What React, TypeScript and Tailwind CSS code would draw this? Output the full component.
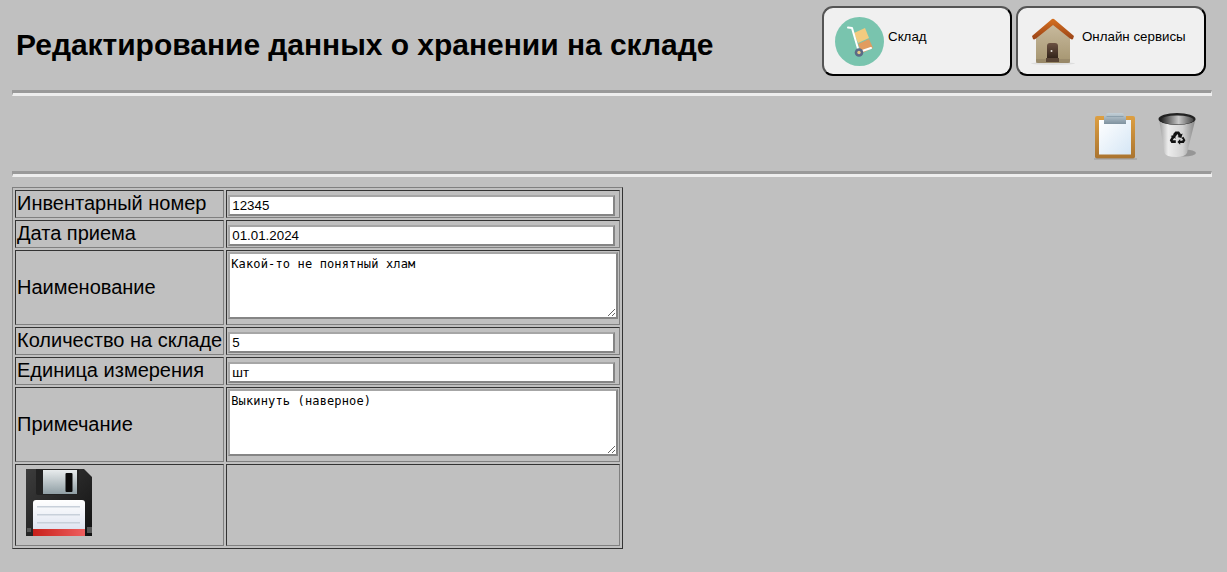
const arial = "font-['Liberation_Sans',Arial,sans-serif]";

function CartIcon() {
  return (
    <svg width="49" height="49" viewBox="0 0 49 49" className="shrink-0">
      <circle cx="24.5" cy="24.5" r="24.5" fill="#79c4ae" />
      <path d="M19 16 L30 11 L34 21 L23 26 Z" fill="#f2cb7f" />
      <path d="M23 27 L34 22 L38 31 L27 36 Z" fill="#e19c60" />
      <path d="M13 10.5 L17 11 L24 35 L36 31" fill="none" stroke="#fff" strokeWidth="2" strokeLinecap="round" strokeLinejoin="round" />
      <circle cx="24" cy="35.5" r="4.3" fill="#5b6a86" />
      <circle cx="24" cy="35.5" r="1.7" fill="#e4c884" />
    </svg>
  );
}

function HouseIcon() {
  return (
    <svg width="46" height="48" viewBox="0 0 46 48" className="shrink-0 blur-[0.3px]">
      <defs>
        <linearGradient id="wall" x1="0" y1="0" x2="0" y2="1">
          <stop offset="0" stopColor="#c9bb9f" />
          <stop offset="1" stopColor="#a59570" />
        </linearGradient>
        <linearGradient id="roof" x1="0" y1="0" x2="0" y2="1">
          <stop offset="0" stopColor="#d6701f" />
          <stop offset="1" stopColor="#9a4418" />
        </linearGradient>
        <linearGradient id="door" x1="0" y1="0" x2="0" y2="1">
          <stop offset="0" stopColor="#6b5142" />
          <stop offset="1" stopColor="#33241a" />
        </linearGradient>
      </defs>
      <ellipse cx="24" cy="46.5" rx="22" ry="1.5" fill="#000" opacity="0.08" />
      <path d="M7 19 L24 6 L41 19 V44 Q41 46 39 46 H9 Q7 46 7 44 Z" fill="url(#wall)" />
      <path d="M3 19 L23 2 Q24 1.5 25 2 L45 19 L44 22 Q43 23 41 21.5 L24 8 L7 21.5 Q5 23 4 22 Z" fill="url(#roof)" />
      <rect x="7" y="42" width="34" height="4" fill="#8b7c5f" opacity="0.5" />
      <path d="M18 41 V29 Q18 26 21 26 H26 Q29 26 29 29 V41 Z" fill="url(#door)" />
      <circle cx="22.5" cy="34" r="1" fill="#e8e4dc" />
      <rect x="17" y="41" width="13" height="4" fill="#5a4636" />
    </svg>
  );
}

function ClipboardIcon() {
  return (
    <svg width="44" height="48" viewBox="0 0 44 48" className="blur-[0.3px]">
      <defs>
        <linearGradient id="board" x1="0" y1="0" x2="0" y2="1">
          <stop offset="0" stopColor="#dd9f42" />
          <stop offset="1" stopColor="#aa7430" />
        </linearGradient>
        <linearGradient id="paper" x1="0" y1="0" x2="1" y2="1">
          <stop offset="0" stopColor="#ffffff" />
          <stop offset="1" stopColor="#d5e6f5" />
        </linearGradient>
        <linearGradient id="clip" x1="0" y1="0" x2="0" y2="1">
          <stop offset="0" stopColor="#c3d0d8" />
          <stop offset="1" stopColor="#7f929f" />
        </linearGradient>
      </defs>
      <rect x="1" y="4" width="40" height="42.5" rx="2" fill="url(#board)" />
      <rect x="5" y="8" width="32" height="34.5" fill="url(#paper)" />
      <path d="M12 4 Q12 1 14 1 H28 Q30 1 30 4 H32 V12 H10 V4 Z" fill="url(#clip)" />
      <rect x="12.5" y="4" width="17" height="1" fill="#8da0ac" />
      <rect x="0" y="46.5" width="43" height="1" fill="#8a8a8a" opacity="0.7" />
    </svg>
  );
}

function TrashIcon() {
  return (
    <svg width="40" height="48" viewBox="0 0 40 48" className="blur-[0.3px]">
      <defs>
        <linearGradient id="can" x1="0" y1="0" x2="1" y2="0">
          <stop offset="0" stopColor="#9c9c9c" />
          <stop offset="0.25" stopColor="#ececec" />
          <stop offset="0.65" stopColor="#d2d2d2" />
          <stop offset="1" stopColor="#858585" />
        </linearGradient>
        <linearGradient id="rim" x1="0" y1="0" x2="1" y2="0">
          <stop offset="0" stopColor="#1e1e1e" />
          <stop offset="0.55" stopColor="#c8c8c8" />
          <stop offset="1" stopColor="#444" />
        </linearGradient>
      </defs>
      <ellipse cx="26" cy="41" rx="12" ry="3.5" fill="#000" opacity="0.22" />
      <path d="M1 7 L6.5 41 Q8 45 18 45 Q27 45 29 41 L37.5 7 Z" fill="url(#can)" />
      <ellipse cx="19" cy="7" rx="18.5" ry="6" fill="#222" />
      <ellipse cx="19" cy="8" rx="16.5" ry="4.5" fill="url(#rim)" />
      <g fill="#111" transform="translate(3.8 5.5) scale(0.8)">
        <path d="M14 21 L17 17.5 H21.5 L24 21 L26 20 L24.5 25.5 L19.5 24.5 L21 23.5 L19.5 20.5 L17 24.5 Z" />
        <path d="M27 24 L29.5 28.5 L27.5 32 H23 V34 L19.5 30.5 L23 27 V29 H25.5 L26.5 27.5 L24.5 25.5 Z" />
        <path d="M12.5 24 L10 28.5 L12 32 H17.5 V28.5 H13.5 L15.5 25.5 L17.5 26.5 L16 21.5 L11 23 Z" />
      </g>
    </svg>
  );
}

function FloppyIcon() {
  return (
    <svg width="68" height="70" viewBox="0 0 68 70" className="block blur-[0.3px]">
      <defs>
        <linearGradient id="body" x1="0" y1="0" x2="1" y2="1">
          <stop offset="0" stopColor="#3c3c3c" />
          <stop offset="1" stopColor="#111" />
        </linearGradient>
        <linearGradient id="shutter" x1="0" y1="0" x2="0" y2="1">
          <stop offset="0" stopColor="#e8eced" />
          <stop offset="1" stopColor="#8f9ea4" />
        </linearGradient>
        <linearGradient id="label" x1="0" y1="0" x2="0" y2="1">
          <stop offset="0" stopColor="#ffffff" />
          <stop offset="1" stopColor="#dfe4f0" />
        </linearGradient>
        <linearGradient id="red" x1="0" y1="0" x2="1" y2="0">
          <stop offset="0" stopColor="#c8201a" />
          <stop offset="1" stopColor="#ee5f5f" />
        </linearGradient>
      </defs>
      <path d="M1 1 H59 L67 9 V68 H1 Z" fill="url(#body)" />
      <path d="M11 1 H54 V25 Q54 27 52 27 H13 Q11 27 11 25 Z" fill="#222" />
      <rect x="18" y="2" width="34" height="24" fill="url(#shutter)" />
      <rect x="40.5" y="5" width="7" height="19" rx="1" fill="#0a0a0a" />
      <path d="M8 35 Q8 32 11 32 H57 Q60 32 60 35 V61 H8 Z" fill="url(#label)" />
      <rect x="12" y="38" width="43" height="1.5" fill="#c8d0da" />
      <rect x="12" y="46" width="43" height="1.5" fill="#c8d0da" />
      <rect x="12" y="54" width="43" height="1.5" fill="#c8d0da" />
      <rect x="8" y="61" width="52" height="7" fill="url(#red)" />
      <rect x="2" y="60" width="4" height="4" fill="#555" />
      <rect x="62" y="59" width="5" height="6" fill="#555" />
    </svg>
  );
}

function Divider() {
  return <div className="h-[6px] border-t-[3px] border-r border-b-[3px] border-l border-t-[#9a9a9a] border-r-[#eeeeee] border-b-[#eeeeee] border-l-[#9a9a9a]" />;
}

function NavButton({ icon, label, pad }: { icon: React.ReactNode; label: string; pad: string }) {
  return (
    <div className={`flex h-[70px] w-[190px] items-center rounded-[11px] border-2 border-t-[#555] border-l-[#555] border-r-black border-b-black bg-[#f0f0f0] text-[13.33px] leading-[15px] text-black ${pad}`}>
      {icon}
      <span className="-mt-[10px]">{label}</span>
    </div>
  );
}

const cell = "border border-t-[#333] border-l-[#333] border-r-[#808080] border-b-[#808080] p-px";
const labelCell = `${cell} whitespace-nowrap text-[20px] leading-[23px] text-black`;
const inputClass = `${arial} mt-[2px] block h-[21px] w-[387px] border-2 border-t-[#a6a6a6] border-l-[#a6a6a6] border-r-[#858585] border-b-[#858585] bg-white px-[2px] text-[13.33px] text-black outline-none`;
const areaClass = "mb-[4px] block h-[67px] w-[390px] resize border-2 border-t-[#a6a6a6] border-l-[#a6a6a6] border-r-[#858585] border-b-[#858585] bg-white px-[1px] pt-[3px] pb-[1px] font-['DejaVu_Sans_Mono',monospace] text-[12px] leading-[15px] tracking-[0.14px] text-black outline-none";

export default function App() {
  return (
    <div className={`${arial} min-h-[572px] bg-[#c0c0c0] px-3`}>
      <div className="w-[1200px]">
        <header className="flex h-[90px] justify-between pt-[6px] pr-[6px]">
          <h1 className="pt-[19px] pl-[4px] text-[30px] leading-[39px] font-bold tracking-[-0.03px] text-black">
            Редактирование данных о хранении на складе
          </h1>
          <div className="flex gap-1">
            <NavButton icon={<CartIcon />} label="Склад" pad="gap-[4px] pl-[11px]" />
            <NavButton icon={<HouseIcon />} label="Онлайн сервисы" pad="gap-[7px] pl-[11px]" />
          </div>
        </header>
        <Divider />
        <div className="flex h-[75px] items-start justify-end gap-[20px] pt-[16px] pr-[14px]">
          <ClipboardIcon />
          <TrashIcon />
        </div>
        <Divider />
        <table className="mt-[10px] border-separate border-spacing-[2px] border border-t-[#808080] border-l-[#808080] border-r-[#333] border-b-[#333]">
          <tbody>
            <tr className="h-[28px]">
              <td className={`${labelCell} w-[209px] pb-[2px]`}>Инвентарный номер</td>
              <td className={`${cell} w-[394px]`}>
                <input className={inputClass} defaultValue="12345" readOnly />
              </td>
            </tr>
            <tr className="h-[28px]">
              <td className={`${labelCell} pb-[2px]`}>Дата приема</td>
              <td className={cell}>
                <input className={inputClass} defaultValue="01.01.2024" readOnly />
              </td>
            </tr>
            <tr className="h-[75px]">
              <td className={labelCell}>Наименование</td>
              <td className={cell}>
                <textarea className={areaClass} defaultValue="Какой-то не понятный хлам" readOnly />
              </td>
            </tr>
            <tr className="h-[28px]">
              <td className={`${labelCell} pb-[2px]`}>Количество на складе</td>
              <td className={cell}>
                <input className={inputClass} defaultValue="5" readOnly />
              </td>
            </tr>
            <tr className="h-[28px]">
              <td className={`${labelCell} pb-[2px]`}>Единица измерения</td>
              <td className={cell}>
                <input className={inputClass} defaultValue="шт" readOnly />
              </td>
            </tr>
            <tr className="h-[75px]">
              <td className={labelCell}>Примечание</td>
              <td className={cell}>
                <textarea className={areaClass} defaultValue="Выкинуть (наверное)" readOnly />
              </td>
            </tr>
            <tr className="h-[82px]">
              <td className={`${cell} pt-[3px] pl-[9px] align-top`}>
                <FloppyIcon />
              </td>
              <td className={cell} />
            </tr>
          </tbody>
        </table>
      </div>
    </div>
  );
}
